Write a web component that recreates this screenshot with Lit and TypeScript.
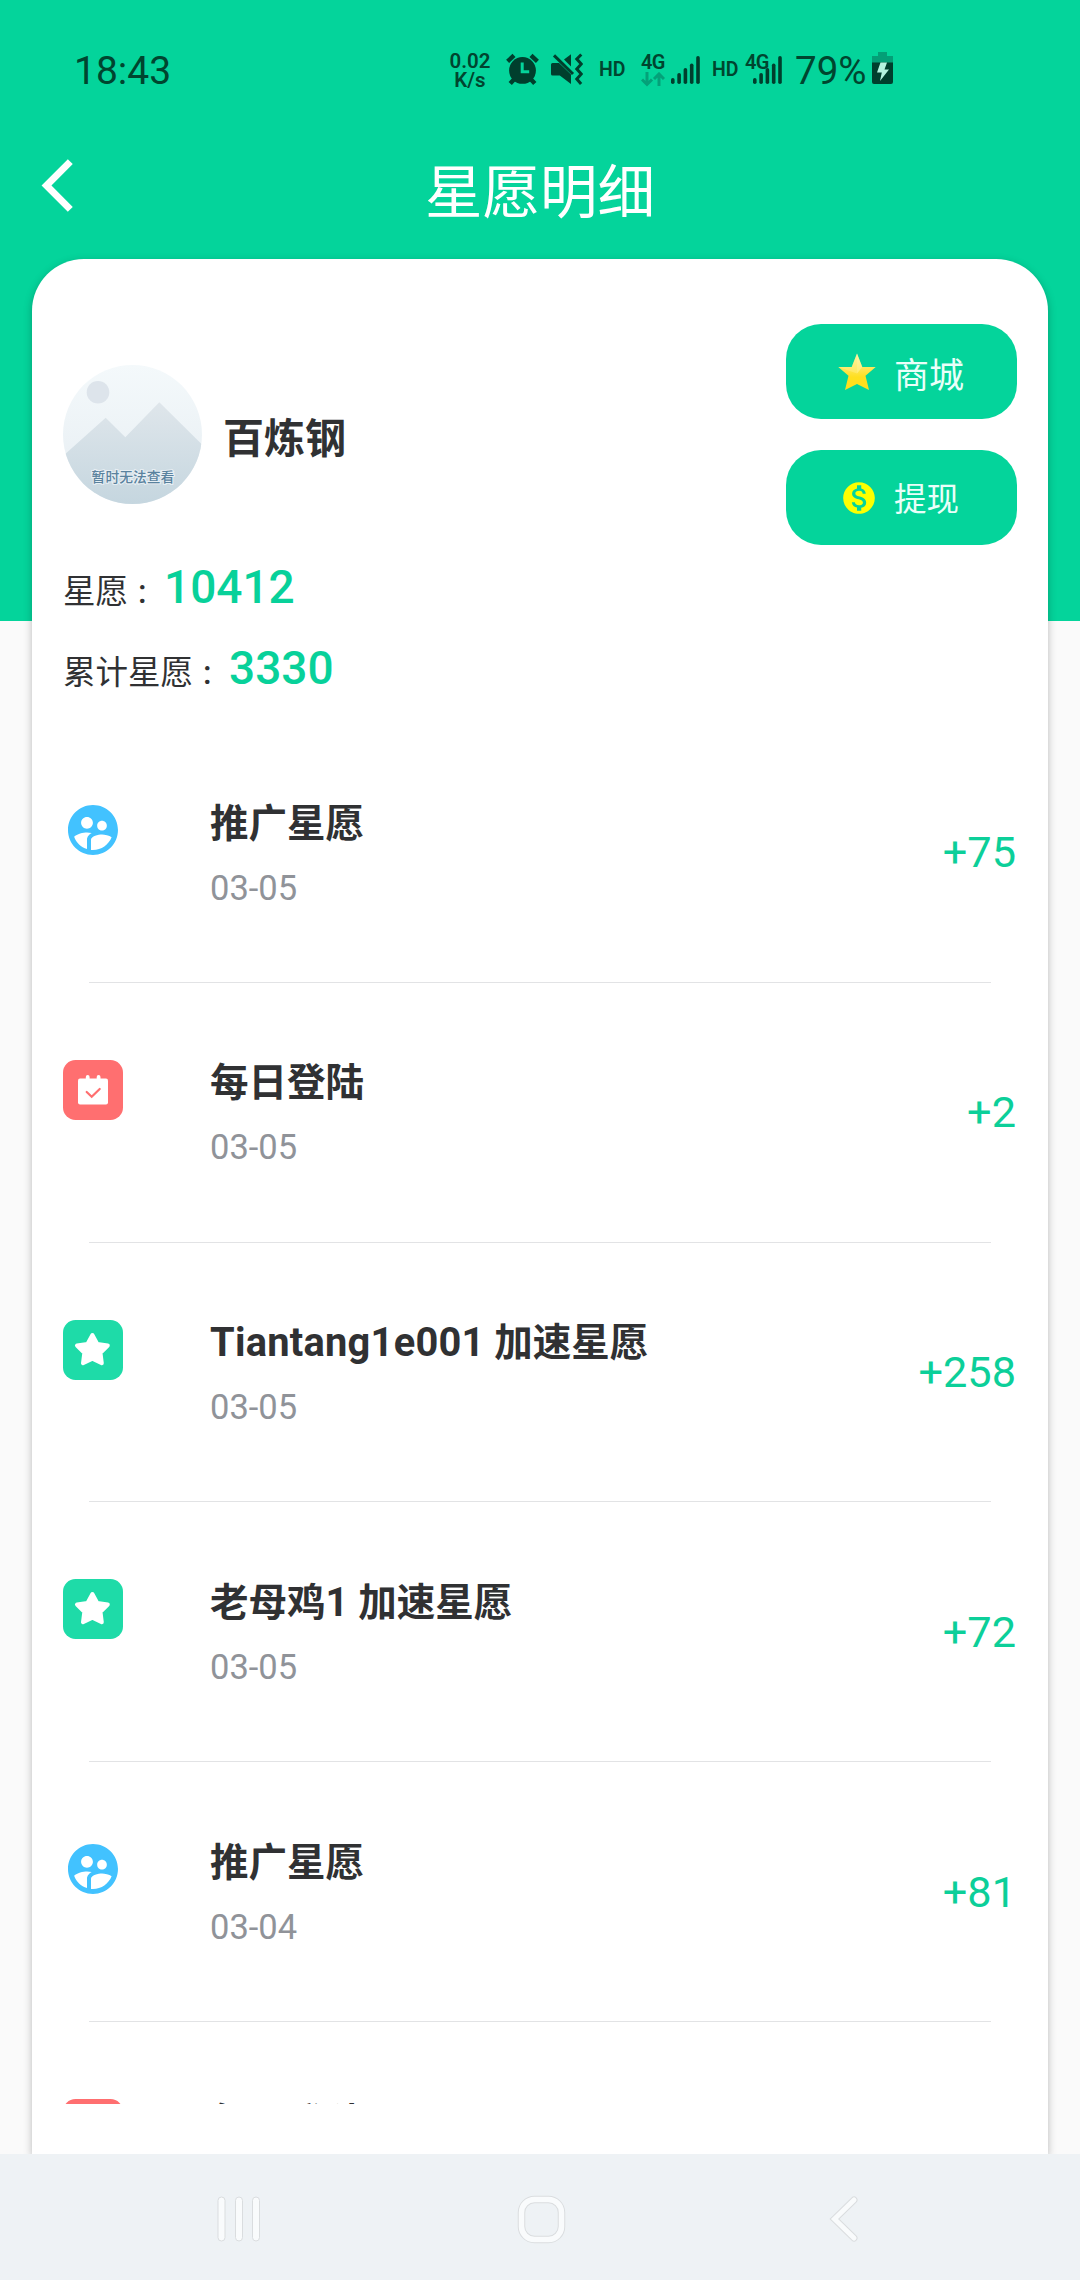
import { LitElement, html, css, svg } from "lit";
import { customElement, property } from "lit/decorators.js";

type Kind = "promo" | "login" | "boost";

interface Entry {
  kind: Kind;
  title: string;
  date?: string;
  amount?: string;
}

const ENTRIES: Entry[] = [
  { kind: "promo", title: "推广星愿", date: "03-05", amount: "+75" },
  { kind: "login", title: "每日登陆", date: "03-05", amount: "+2" },
  { kind: "boost", title: "Tiantang1e001 加速星愿", date: "03-05", amount: "+258" },
  { kind: "boost", title: "老母鸡1 加速星愿", date: "03-05", amount: "+72" },
  { kind: "promo", title: "推广星愿", date: "03-04", amount: "+81" },
  { kind: "login", title: "每日登陆" },
];

const signalBars = svg`
  <rect x="0" y="22" width="3.6" height="6" rx="1.8"/>
  <rect x="6.3" y="17" width="3.6" height="11" rx="1.8"/>
  <rect x="12.6" y="12" width="3.6" height="16" rx="1.8"/>
  <rect x="18.9" y="7.5" width="3.6" height="20.5" rx="1.8"/>
  <rect x="25.2" y="0" width="3.6" height="28" rx="1.8"/>`;

@customElement("status-bar")
export class StatusBar extends LitElement {
  static styles = css`
    :host {
      display: flex;
      height: 141px;
      box-sizing: border-box;
      padding: 50px 0 0 74px;
      align-items: flex-start;
      color: #00452f;
      fill: #003f2d;
      font-family: Roboto, "Noto Sans CJK SC", sans-serif;
    }
    svg { display: block; flex: none; }
    .clock, .percent { font-size: 39px; line-height: 40px; font-weight: 400; white-space: nowrap; margin-top: 1px; }
    .clock { width: 374px; }
    .speed {
      display: flex;
      flex-direction: column;
      width: 44px;
      margin-top: 2px;
      font-size: 20.5px;
      line-height: 19px;
      font-weight: 600;
      text-align: center;
    }
    .hd { font-size: 19.5px; line-height: 40px; font-weight: 600; width: 26px; }
    .alarm { margin: 3px 0 0 14px; }
    .mute { margin: 3px 16px 0 12px; }
    .net { width: 24px; margin-left: 16px; }
    .gen { display: block; font-size: 20px; line-height: 20px; font-weight: 600; margin-top: 1.5px; letter-spacing: -0.8px; }
    .bars { margin: 6px 12px 0 6px; }
    .dual { display: grid; width: 38px; margin: 0 12px 0 7px; }
    .dual > * { grid-area: 1 / 1; }
    .dual .bars { margin: 6px 0 0 8px; }
    .percent { width: 72px; font-size: 38.5px; }
    .battery { margin: 2px 0 0 5px; }
  `;

  render() {
    return html`
      <span class="clock">18:43</span>
      <span class="speed"><span>0.02</span><span>K/s</span></span>
      <svg class="alarm" width="33" height="33" viewBox="0 0 33 33">
        <g stroke="#003f2d" stroke-width="4.4" fill="none">
          <path d="M1.6 8.4 8 2.4M25 2.4l6.4 6M8.4 26 4.2 30.6M24.6 26l4.2 4.6" />
        </g>
        <circle cx="16.5" cy="17.4" r="13.4" />
        <path d="M16.2 9.5v9.2h7" fill="none" stroke="#04d49b" stroke-width="3" />
      </svg>
      <svg class="mute" width="32" height="33" viewBox="0 0 32 33">
        <path d="M0 11.5Q0 10 1.5 10H8l12 11.6V31L8.800 22.500H1.500Q0 22.500 0 21z" />
        <path d="M13 6.600 20 1.200V13.400z" />
        <path d="M3 2.400 22 21" stroke="#003f2d" stroke-width="3" />
        <path d="M30.300 1.500 25.800 6l4.500 5-4.500 5 4.500 5-4.500 5 4.300 5" fill="none" stroke="#003f2d" stroke-width="3" />
      </svg>
      <span class="hd">HD</span>
      <span class="net">
        <span class="gen">4G</span>
        <svg width="24" height="15" viewBox="0 0 24 15">
          <path d="M6 0v12M1 7.500 6 12.500l5-5M18 14V2M13 7l5-5 5 5" fill="none" stroke="#04a179" stroke-width="3" />
        </svg>
      </span>
      <svg class="bars" width="29" height="28" viewBox="0 0 29 28">${signalBars}</svg>
      <span class="hd">HD</span>
      <span class="dual">
        <svg class="bars" width="29" height="28" viewBox="0 0 29 28">${signalBars}</svg>
        <span class="gen">4G</span>
      </span>
      <span class="percent">79%</span>
      <svg class="battery" width="22" height="33" viewBox="0 0 22 33">
        <path d="M6 0h9v4h6v7H0V4h6z" fill="#049f77" />
        <path d="M0 10.500h21V30q0 2-2 2H2q-2 0-2-2z" />
        <path d="M8.500 10.500 15 10.500 12.500 17.500H17L8 29l1.800-8.500H5z" fill="#b4f3df" />
      </svg>
    `;
  }
}

@customElement("entry-icon")
export class EntryIcon extends LitElement {
  @property() kind: Kind = "promo";

  static styles = css`
    :host { display: block; width: 60px; height: 60px; }
    svg { display: block; }
  `;

  render() {
    if (this.kind === "promo") {
      return html`<svg width="60" height="60" viewBox="0 0 24 24" fill="#42c2ff">
        <path d="M11.990 2c-5.520 0-10 4.480-10 10s4.480 10 10 10 10-4.480 10-10-4.480-10-10-10zm3.610 6.340c1.070 0 1.930.86 1.930 1.930 0 1.070-.86 1.930-1.930 1.930-1.070 0-1.930-.86-1.930-1.930-.01-1.070.86-1.930 1.930-1.930zm-6-1.580c1.300 0 2.360 1.060 2.360 2.360 0 1.300-1.060 2.360-2.360 2.360s-2.360-1.060-2.360-2.360c0-1.310 1.050-2.360 2.360-2.360zm0 9.130v3.750c-2.400-.75-4.300-2.600-5.140-4.960 1.050-1.120 3.670-1.690 5.140-1.690.53 0 1.200.08 1.900.22-1.640.87-1.900 2.020-1.900 2.680zM11.990 20c-.27 0-.53-.01-.79-.04v-4.070c0-1.420 2.940-2.130 4.400-2.130 1.070 0 2.920.39 3.840 1.150-1.170 2.970-4.060 5.090-7.450 5.090z" />
      </svg>`;
    }
    if (this.kind === "login") {
      return html`<svg width="60" height="60" viewBox="0 0 60 60">
        <rect width="60" height="60" rx="12.500" fill="#ff6f70" />
        <rect x="15" y="18.500" width="30" height="26" rx="2" fill="#fff" />
        <path d="M24.700 17v3M35.600 17v3" stroke="#fff" stroke-width="3.800" stroke-linecap="round" />
        <path d="m23.700 32 5 4.700 8-7.700" fill="none" stroke="#ff6f70" stroke-width="2.200" stroke-linecap="round" />
      </svg>`;
    }
    return html`<svg width="60" height="60" viewBox="0 0 60 60">
      <rect width="60" height="60" rx="12.500" fill="#1edba8" />
      <path d="M29.400 15 34.300 23.900 44.800 25.500 37.500 32.900 38.800 43.200 29.400 38.600 20 43.200 21.300 32.900 14 25.500 24.500 23.900z" fill="#fff" stroke="#fff" stroke-width="4" stroke-linejoin="round" />
    </svg>`;
  }
}

@customElement("app-root")
export class AppRoot extends LitElement {
  static styles = css`
    :host {
      display: flex;
      flex-direction: column;
      width: 1080px;
      height: 2280px;
      overflow: hidden;
      background: #fafafa;
      color: #303133;
      font-family: Roboto, "Noto Sans CJK SC", sans-serif;
    }
    svg { display: block; flex: none; }
    .screen {
      display: flex;
      flex-direction: column;
      height: 2154px;
      overflow: hidden;
      background: linear-gradient(#04d49b 621px, #fafafa 621px);
    }
    .title-bar {
      display: grid;
      grid-template-columns: 80px 1fr 80px;
      height: 118px;
      color: #fff;
    }
    .back { margin: 17px 0 0 41px; }
    h1 {
      margin: 0;
      font-size: 57.5px;
      font-weight: 400;
      line-height: 106px;
      text-align: center;
    }
    .card {
      flex: 1;
      display: flex;
      flex-direction: column;
      margin: 0 32px;
      padding: 0 31px;
      background: #fff;
      border-radius: 52px 52px 0 0;
      box-shadow: 0 3px 9px rgba(0, 0, 0, 0.26);
    }
    .profile {
      display: flex;
      justify-content: space-between;
      height: 464px;
    }
    .user { display: flex; align-items: center; gap: 21px; margin-top: 106px; }
    .name { font-size: 41px; line-height: 60px; font-weight: 700; padding-top: 8px; }
    .stats { margin-top: 43px; }
    .stat { display: flex; align-items: baseline; height: 81px; line-height: 81px; }
    .label { font-size: 32.5px; width: 101px; }
    .label.wide { width: 166px; }
    .colon { padding-left: 10px; font-weight: 500; }
    .value { font-size: 46px; font-weight: 500; color: #08d19a; }
    .actions { display: flex; flex-direction: column; gap: 31px; margin-top: 65px; }
    .action {
      display: flex;
      align-items: center;
      box-sizing: border-box;
      width: 231px;
      height: 95px;
      border-radius: 35px;
      background: #04d49b;
      color: #e9fff9;
    }
    .action span { line-height: 50px; padding-top: 5px; }
    .shop { padding-left: 52px; gap: 18px; font-size: 35px; }
    .shop span { padding-top: 11px; }
    .cash { padding-left: 54px; gap: 16px; font-size: 32.5px; }
    .list { height: 1380.7px; overflow: hidden; }
    .row {
      display: grid;
      grid-template-columns: 60px 1fr auto;
      column-gap: 87px;
      height: 258.8px;
    }
    .row entry-icon { margin-top: 77px; }
    .text { padding-top: 80.7px; }
    .entry { font-size: 38.5px; font-weight: 700; line-height: 40px; height: 40px; }
    .latin { font-size: 39.8px; letter-spacing: 0.25px; }
    .date { margin-top: 24px; font-size: 34.5px; line-height: 40px; color: #909399; }
    .amount { align-self: center; padding: 2px 1px 0 0; font-size: 43.3px; line-height: 50px; color: #0ccf99; }
    .rule { height: 1px; margin: 0 26px; background: #e2e3e5; }
    .nav {
      display: grid;
      grid-template-columns: repeat(3, 1fr);
      height: 126px;
      align-items: center;
      justify-items: center;
      padding: 4px 85px 0 88px;
      box-sizing: border-box;
      background: #eef2f5;
    }
  `;

  render() {
    return html`
      <main class="screen">
        <status-bar></status-bar>
        <header class="title-bar">
          <svg class="back" width="33" height="55" viewBox="0 0 33 55">
            <path d="M29.300 3.600 5.500 27.500 29.300 51.400" fill="none" stroke="#fff" stroke-width="7" />
          </svg>
          <h1>星愿明细</h1>
        </header>
        <section class="card">
          <div class="profile">
            <div>
              <div class="user">
                ${this.avatar()}
                <div class="name">百炼钢</div>
              </div>
              <div class="stats">
                <div class="stat">
                  <span class="label">星愿<span class="colon">:</span></span>
                  <span class="value">10412</span>
                </div>
                <div class="stat">
                  <span class="label wide">累计星愿<span class="colon">:</span></span>
                  <span class="value">3330</span>
                </div>
              </div>
            </div>
            <div class="actions">
              <div class="action shop">
                <svg width="38" height="38" viewBox="0 0 38 38">
                  <defs>
                    <linearGradient id="gold" x1="0" y1="0" x2="0" y2="1">
                      <stop offset="0" stop-color="#fff3a0" />
                      <stop offset="0.450" stop-color="#ffe54d" />
                      <stop offset="0.650" stop-color="#ffdf1f" />
                      <stop offset="1" stop-color="#ffe01a" />
                    </linearGradient>
                  </defs>
                  <path d="M19 .5 24.300 14H37.700L27.500 22.800 31 37 19 31 7 37 10.500 22.800.3 14H13.700z" fill="url(#gold)" />
                  <path d="M19 .5 24.300 14 19 20.500z" fill="#fff8b8" opacity="0.450" />
                  <path d="M19 20.500.3 14H13.700L19 .5z" fill="#fff3a0" opacity="0.350" />
                </svg>
                <span>商城</span>
              </div>
              <div class="action cash">
                <svg width="38" height="38" viewBox="0 0 24 24" fill="#fdff00">
                  <path d="M12 2C6.480 2 2 6.480 2 12s4.480 10 10 10 10-4.480 10-10S17.520 2 12 2zm1.410 16.090V20h-2.670v-1.930c-1.710-.36-3.160-1.460-3.270-3.400h1.960c.1 1.050.82 1.870 2.650 1.870 1.960 0 2.400-.98 2.400-1.590 0-.83-.44-1.610-2.670-2.140-2.480-.6-4.180-1.620-4.180-3.670 0-1.720 1.390-2.840 3.110-3.210V4h2.670v1.950c1.860.45 2.790 1.860 2.850 3.390H14.300c-.05-1.110-.64-1.870-2.220-1.870-1.500 0-2.400.68-2.400 1.640 0 .84.65 1.390 2.670 1.910s4.180 1.390 4.180 3.910c-.02 1.830-1.380 2.830-3.120 3.160z" />
                </svg>
                <span>提现</span>
              </div>
            </div>
          </div>
          <div class="list">
            ${ENTRIES.map(
              (e) => html`
                <article class="row">
                  <entry-icon .kind=${e.kind}></entry-icon>
                  <div class="text">
                    <div class="entry">${this.runs(e.title)}</div>
                    ${e.date ? html`<div class="date">${e.date}</div>` : null}
                  </div>
                  ${e.amount ? html`<div class="amount">${e.amount}</div>` : null}
                </article>
                <div class="rule"></div>
              `
            )}
          </div>
        </section>
      </main>
      <nav class="nav">
        <svg width="46" height="48" viewBox="0 0 46 48" fill="#f9fbfc" stroke="#dadddf">
          <rect x="2" y="2" width="7" height="44" rx="3.500" />
          <rect x="19.500" y="2" width="7" height="44" rx="3.500" />
          <rect x="36.500" y="2" width="7" height="44" rx="3.500" />
        </svg>
        <svg width="49" height="49" viewBox="0 0 49 49" fill="none">
          <rect x="4.500" y="4.500" width="40" height="40" rx="13" stroke="#dadddf" stroke-width="7.500" />
          <rect x="4.500" y="4.500" width="40" height="40" rx="13" stroke="#f9fbfc" stroke-width="5.500" />
        </svg>
        <svg width="30" height="48" viewBox="0 0 30 48" fill="none" stroke-linecap="round">
          <path d="M25 5 5.500 24 25 43" stroke="#dadddf" stroke-width="7" />
          <path d="M25 5 5.500 24 25 43" stroke="#f9fbfc" stroke-width="5" />
        </svg>
      </nav>
    `;
  }

  /** Latin runs are set slightly larger than the Chinese characters beside them. */
  private runs(title: string) {
    return title
      .split(/([A-Za-z0-9]+)/)
      .filter(Boolean)
      .map((part) => (/^[A-Za-z0-9]/.test(part) ? html`<span class="latin">${part}</span>` : part));
  }

  private avatar() {
    return html`<svg width="139" height="139" viewBox="0 0 139 139">
      <defs>
        <clipPath id="round"><circle cx="69.500" cy="69.500" r="69.500" /></clipPath>
        <linearGradient id="sky" x1="0" y1="0" x2="0" y2="1">
          <stop offset="0" stop-color="#f4f9fb" />
          <stop offset="1" stop-color="#e6edf2" />
        </linearGradient>
        <linearGradient id="hill" x1="0" y1="0" x2="0" y2="1">
          <stop offset="0" stop-color="#dfe6eb" />
          <stop offset="1" stop-color="#c5d6df" />
        </linearGradient>
      </defs>
      <g clip-path="url(#round)">
        <rect width="139" height="139" fill="url(#sky)" />
        <circle cx="35" cy="27.300" r="11.300" fill="#dde4eb" />
        <path d="M0 91 42.700 52.700 62.300 72.300 96.300 37.300 139 79.500V139H0z" fill="url(#hill)" />
        <text x="70" y="116.500" text-anchor="middle" font-size="13.800" font-weight="500" fill="#5a829e" stroke="#eef4f8" stroke-width="2.200" stroke-opacity="0.800" paint-order="stroke">暂时无法查看</text>
      </g>
    </svg>`;
  }
}
